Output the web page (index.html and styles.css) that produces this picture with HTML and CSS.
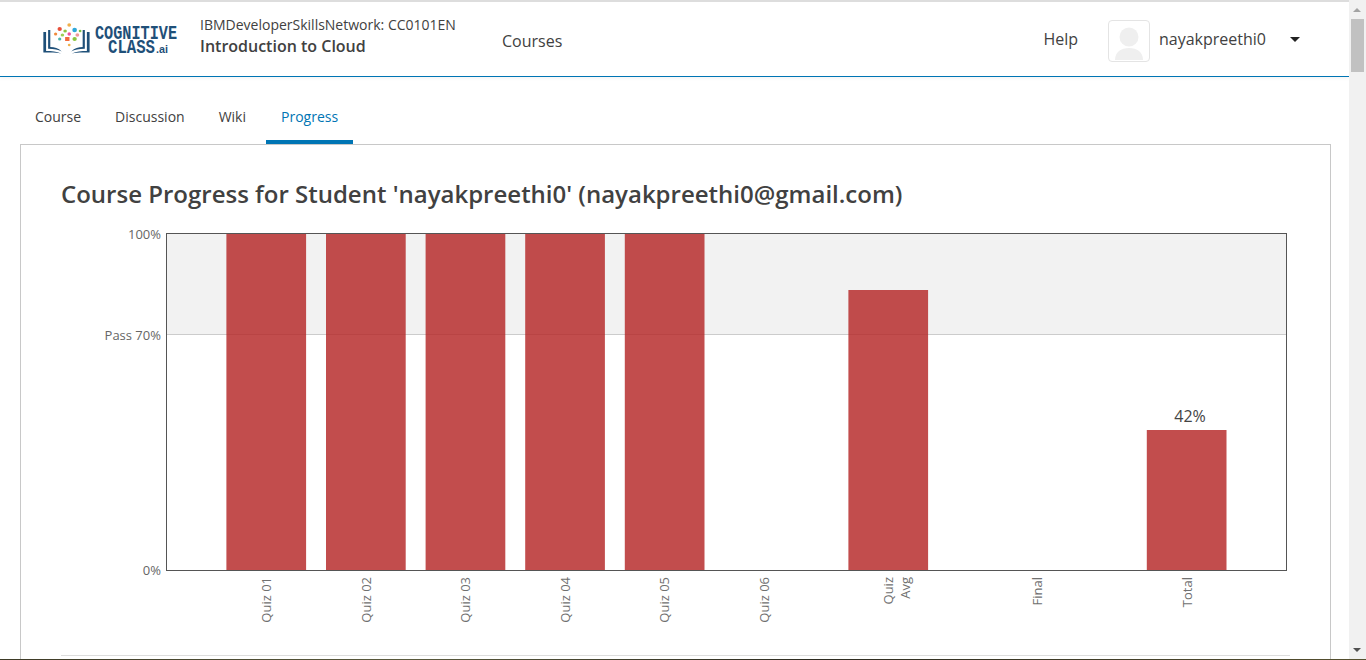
FILE: index.html
```html
<!DOCTYPE html>
<html lang="en">
<head>
    <meta charset="UTF-8">
    <meta name="viewport" content="width=device-width, initial-scale=1.0">
    <title>Progress | Introduction to Cloud</title>
    <link rel="stylesheet" href="styles.css">
</head>
<body>
    <div class="shell">
        <div class="page">
            <header class="site-header">
                <a class="logo" href="#">
                    <svg width="136" height="34" viewBox="0 0 136 34">
                        <g transform="translate(0 3) scale(1.36 1)">
                            <g fill="#1f5079">
                                <path d="M1 7h2v19c4 0 8 .5 11 2.500-3-1-7-1.200-13-.9z"/>
                                <path d="M4.500 5h1.600v17c3 0 6 1 8.400 4.500-2.500-2-5.500-2.800-10-2.800z"/>
                                <path d="M35 7h-2v19c-4 0-8 .5-11 2.500 3-1 7-1.200 13-.9z"/>
                                <path d="M31.500 5h-1.600v17c-3 0-6 1-8.400 4.500 2.500-2 5.500-2.800 10-2.800z"/>
                            </g>
                            <ellipse cx="13" cy="4" rx="1.600" ry="2" fill="#e8503a"/>
                            <ellipse cx="20" cy="0" rx="1.400" ry="1.800" fill="#f0b04a"/>
                            <ellipse cx="24" cy="5" rx="1.700" ry="2.200" fill="#2fa8d8"/>
                            <ellipse cx="17" cy="6" rx="1.300" ry="1.600" fill="#8cc63f"/>
                            <ellipse cx="10" cy="9" rx="1.200" ry="1.500" fill="#f08a3c"/>
                            <ellipse cx="15" cy="10" rx="1.300" ry="1.600" fill="#9bcf53"/>
                            <ellipse cx="20" cy="9" rx="1.300" ry="1.700" fill="#ee4f9c"/>
                            <ellipse cx="26" cy="10" rx="1.400" ry="1.800" fill="#ef9a9a"/>
                            <ellipse cx="28" cy="6" rx="1" ry="1.300" fill="#7dc242"/>
                            <rect x="17" y="12" width="3.200" height="4" fill="#f26b3a"/>
                            <ellipse cx="24" cy="14" rx="1.600" ry="2" fill="#8cc63f"/>
                            <ellipse cx="13" cy="14" rx="1.200" ry="1.500" fill="#4db6ac"/>
                            <ellipse cx="20" cy="20" rx="1" ry="1.300" fill="#f0b04a"/>
                        </g>
                        <text class="logo-word" x="53" y="17" textLength="82" lengthAdjust="spacingAndGlyphs">COGNITIVE</text>
                        <text class="logo-word" x="66" y="31" textLength="47" lengthAdjust="spacingAndGlyphs">CLASS</text>
                        <text class="logo-ai" x="114" y="31" textLength="12" lengthAdjust="spacingAndGlyphs">.ai</text>
                    </svg>
                </a>
                <div class="course-info">
                    <span class="course-org">IBMDeveloperSkillsNetwork: CC0101EN</span>
                    <span class="course-name">Introduction to Cloud</span>
                </div>
                <a class="nav-link courses-link" href="#">Courses</a>
                <a class="nav-link help-link" href="#">Help</a>
                <div class="user-menu">
                    <span class="avatar">
                        <svg width="40" height="40" viewBox="0 0 40 40">
                            <circle cx="20" cy="16" r="9.500" fill="#efefef"/>
                            <path d="M6 39c0-8 6-12 14-12s14 4 14 12z" fill="#efefef"/>
                        </svg>
                    </span>
                    <span class="user-name">nayakpreethi0</span>
                    <span class="caret"></span>
                </div>
            </header>

            <nav class="tabs">
                <a class="tab" href="#">Course</a>
                <a class="tab" href="#">Discussion</a>
                <a class="tab" href="#">Wiki</a>
                <a class="tab active" href="#">Progress</a>
            </nav>

            <main class="card">
                <h1 class="card-title">Course Progress for Student 'nayakpreethi0' (nayakpreethi0@gmail.com)</h1>
                <svg class="chart" width="1229" height="435" viewBox="61 220 1229 435">
                    <rect class="pass-zone" x="166" y="233" width="1121" height="101"/>
                    <line class="pass-line" x1="166" y1="334.500" x2="1287" y2="334.500"/>

                    <rect class="bar" x="226.400" y="233" width="79.700" height="338"/>
                    <rect class="bar" x="326" y="233" width="79.700" height="338"/>
                    <rect class="bar" x="425.600" y="233" width="79.700" height="338"/>
                    <rect class="bar" x="525.200" y="233" width="79.700" height="338"/>
                    <rect class="bar" x="624.800" y="233" width="79.700" height="338"/>
                    <rect class="bar" x="848.400" y="290" width="79.700" height="281"/>
                    <rect class="bar" x="1146.800" y="430" width="79.700" height="141"/>

                    <rect class="plot-frame" x="166.500" y="233.500" width="1120" height="337"/>

                    <text class="y-label" x="161" y="239">100%</text>
                    <text class="y-label" x="161" y="340">Pass 70%</text>
                    <text class="y-label" x="161" y="575">0%</text>

                    <text class="bar-value" x="1190" y="422">42%</text>

                    <text class="x-label" transform="translate(270.500 577) rotate(-90)">Quiz 01</text>
                    <text class="x-label" transform="translate(370.500 577) rotate(-90)">Quiz 02</text>
                    <text class="x-label" transform="translate(469.500 577) rotate(-90)">Quiz 03</text>
                    <text class="x-label" transform="translate(569.500 577) rotate(-90)">Quiz 04</text>
                    <text class="x-label" transform="translate(668.500 577) rotate(-90)">Quiz 05</text>
                    <text class="x-label" transform="translate(768.500 577) rotate(-90)">Quiz 06</text>
                    <text class="x-label" transform="translate(892.500 577) rotate(-90)">Quiz</text>
                    <text class="x-label" transform="translate(909.500 577) rotate(-90)">Avg</text>
                    <text class="x-label" transform="translate(1041.500 577) rotate(-90)">Final</text>
                    <text class="x-label" transform="translate(1191.500 577) rotate(-90)">Total</text>
                </svg>
                <hr class="divider">
            </main>
        </div>

        <div class="scrollbar">
            <span class="arrow-up"></span>
            <span class="thumb"></span>
            <span class="arrow-down"></span>
        </div>
    </div>
    <div class="bottom-strip"></div>
</body>
</html>
```

FILE: styles.css
```css
:root {
    --blue: #0075b4;
    --text-color: #414141;
    --border-color: #c8c8c8;
}
html, body {
    margin: 0;
    padding: 0;
    height: 100%;
    overflow: hidden;
}
body {
    font-family: "Open Sans", sans-serif;
    color: var(--text-color);
    background-color: #fff;
}
a {
    color: inherit;
    text-decoration: none;
}
.shell {
    display: flex;
    height: 659px;
    overflow: hidden;
}
.page {
    flex: 1;
    min-width: 0;
}
.bottom-strip {
    height: 1px;
    background: linear-gradient(90deg, #3d3a26, #5a5a3c 30%, #2d2b20 60%, #55502f);
}

/* Header */
.site-header {
    display: flex;
    align-items: center;
    box-sizing: border-box;
    height: 77px;
    padding: 2px 0 0 42px;
    border-top: 2px solid #ddd;
    border-bottom: 1px solid var(--blue);
    box-shadow: 0 2px 3px rgba(0, 0, 0, 0.04);
}
.logo {
    display: block;
    width: 136px;
    height: 34px;
    margin-top: -2px;
}
.logo svg {
    display: block;
    overflow: visible;
}
.logo-word {
    font-family: "Liberation Mono", monospace;
    font-weight: bold;
    font-size: 20px;
    fill: #1f5079;
}
.logo-ai {
    font-family: "Liberation Sans", sans-serif;
    font-weight: bold;
    font-size: 11px;
    fill: #1f5079;
}
.course-info {
    display: flex;
    flex-direction: column;
    width: 302px;
    margin: -8px 0 0 22px;
}
.course-org {
    font-size: 14px;
    line-height: 20px;
    white-space: nowrap;
}
.course-name {
    font-size: 16px;
    font-weight: 600;
    line-height: 22px;
}
.nav-link {
    font-size: 16px;
    line-height: 22px;
}
.courses-link {
    margin-top: 2px;
}
.help-link {
    margin: -2px 0 0 auto;
}
.user-menu {
    display: flex;
    align-items: center;
    width: 241px;
    margin: 2px 0 0 30px;
}
.avatar {
    box-sizing: border-box;
    width: 42px;
    height: 42px;
    border: 1px solid #e4e4e4;
    border-radius: 4px;
    overflow: hidden;
}
.avatar svg {
    display: block;
}
.user-name {
    margin: -4px 0 0 9px;
    font-size: 16px;
    line-height: 22px;
}
.caret {
    width: 0;
    height: 0;
    margin: -4px 0 0 24px;
    border-left: 5px solid transparent;
    border-right: 5px solid transparent;
    border-top: 5px solid #222;
}

/* Tabs */
.tabs {
    display: flex;
    gap: 4px;
    height: 67px;
    padding-left: 20px;
    box-sizing: border-box;
}
.tab {
    box-sizing: border-box;
    height: 67px;
    padding: 29px 15px 0;
    font-size: 14px;
    line-height: 22px;
}
.tab.active {
    color: var(--blue);
    margin-left: 1px;
    border-bottom: 4px solid var(--blue);
}

/* Progress card */
.card {
    box-sizing: border-box;
    width: 1311px;
    height: 600px;
    margin-left: 20px;
    padding: 33px 40px 0;
    border: 1px solid var(--border-color);
}
.card-title {
    margin: 0 0 10px;
    font-size: 24px;
    font-weight: 600;
    line-height: 32px;
    white-space: nowrap;
}
.chart {
    display: block;
}
.divider {
    width: 1229px;
    height: 1px;
    margin: 0;
    border: none;
    background-color: #ddd;
}

/* Chart parts */
.pass-zone {
    fill: #f2f2f2;
}
.pass-line {
    stroke: #ccc;
    stroke-width: 1;
}
.bar {
    fill: rgba(180, 36, 36, 0.81);
}
.plot-frame {
    fill: none;
    stroke: #555;
    stroke-width: 1;
}
.y-label {
    font-size: 13px;
    fill: #666;
    text-anchor: end;
}
.x-label {
    font-size: 13px;
    fill: #707070;
    text-anchor: end;
}
.bar-value {
    font-size: 16px;
    fill: #444;
    text-anchor: middle;
}

/* Scrollbar */
.scrollbar {
    position: relative;
    flex: none;
    width: 17px;
    background-color: #f1f1f1;
}
.thumb {
    position: absolute;
    top: 19px;
    left: 2px;
    width: 13px;
    height: 53px;
    background-color: #c1c1c1;
}
.arrow-up,
.arrow-down {
    position: absolute;
    left: 4px;
    width: 0;
    height: 0;
    border-left: 4px solid transparent;
    border-right: 4px solid transparent;
}
.arrow-up {
    top: 8px;
    border-bottom: 4px solid #a3a3a3;
}
.arrow-down {
    top: 648px;
    border-top: 4px solid #505050;
}
```
